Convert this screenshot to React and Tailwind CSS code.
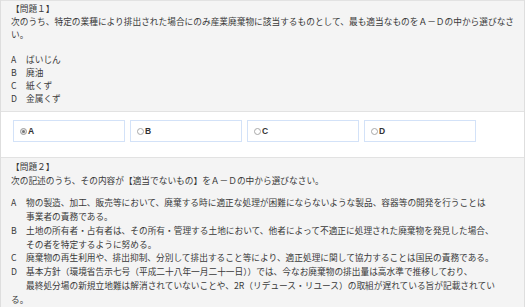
import React from "react";

const jp = { fontFamily: '"Noto Sans CJK JP", "Noto Sans", sans-serif' };

function Row({ label, lines }) {
  return (
    <div className="flex">
      <span className="w-[15px] shrink-0">{label}</span>
      <div>
        {lines.map((l, i) => (
          <div key={i}>{l}</div>
        ))}
      </div>
    </div>
  );
}

function Opt({ label, checked }) {
  return (
    <div className="flex h-[22px] w-[112px] items-center border border-[#d3e2f8] bg-white pl-[6px]">
      <span
        className={
          "flex h-[7px] w-[7px] items-center justify-center rounded-full border " +
          (checked ? "border-[#9a9a9a] bg-[#e6e6e6]" : "border-[#a8a8a8] bg-white")
        }
      >
        {checked ? <span className="h-[3px] w-[3px] rounded-full bg-[#777]" /> : null}
      </span>
      <span
        className="ml-[1px] text-[8.5px] font-bold text-[#333]"
        style={{ fontFamily: '"Liberation Sans", Arial, sans-serif' }}
      >
        {label}
      </span>
    </div>
  );
}

export default function App() {
  return (
    <div className="h-[307px] w-[528px] overflow-hidden bg-white" style={jp}>
      <div className="w-[525px] border-x border-[#dedede]">
        <div className="border-t border-b border-[#e2e2e2] bg-[#f4f4f4] pl-[10px] pt-[1px] pb-[6px] text-[8.7px] leading-[13px] text-[#3a3a3a]">
          <div>【問題１】</div>
          <div>次のうち、特定の業種により排出された場合にのみ産業廃棄物に該当するものとして、最も適当なものをＡ－Ｄの中から選びなさ</div>
          <div>い。</div>
          <div className="h-[12px]" />
          <div>
            <Row label="A" lines={["ばいじん"]} />
            <Row label="B" lines={["廃油"]} />
            <Row label="C" lines={["紙くず"]} />
            <Row label="D" lines={["金属くず"]} />
          </div>
        </div>
        <div className="flex gap-[5px] bg-white pl-[12px] pt-[8px] pb-[15px]">
          <Opt label="A" checked />
          <Opt label="B" />
          <Opt label="C" />
          <Opt label="D" />
        </div>
        <div className="border-t border-[#e2e2e2] bg-[#f4f4f4] pl-[10px] pt-[2px] text-[8.7px] leading-[13.9px] text-[#3a3a3a]">
          <div>【問題２】</div>
          <div>次の記述のうち、その内容が【適当でないもの】をＡ－Ｄの中から選びなさい。</div>
          <div className="h-[8px]" />
          <Row
            label="A"
            lines={[
              "物の製造、加工、販売等において、廃棄する時に適正な処理が困難にならないような製品、容器等の開発を行うことは",
              "事業者の責務である。",
            ]}
          />
          <Row
            label="B"
            lines={[
              "土地の所有者・占有者は、その所有・管理する土地において、他者によって不適正に処理された廃棄物を発見した場合、",
              "その者を特定するように努める。",
            ]}
          />
          <Row
            label="C"
            lines={["廃棄物の再生利用や、排出抑制、分別して排出すること等により、適正処理に関して協力することは国民の責務である。"]}
          />
          <Row
            label="D"
            lines={[
              "基本方針（環境省告示七号（平成二十八年一月二十一日））では、今なお廃棄物の排出量は高水準で推移しており、",
              "最終処分場の新規立地難は解消されていないことや、2R（リデュース・リユース）の取組が遅れている旨が記載されてい",
            ]}
          />
          <div>る。</div>
        </div>
      </div>
    </div>
  );
}
